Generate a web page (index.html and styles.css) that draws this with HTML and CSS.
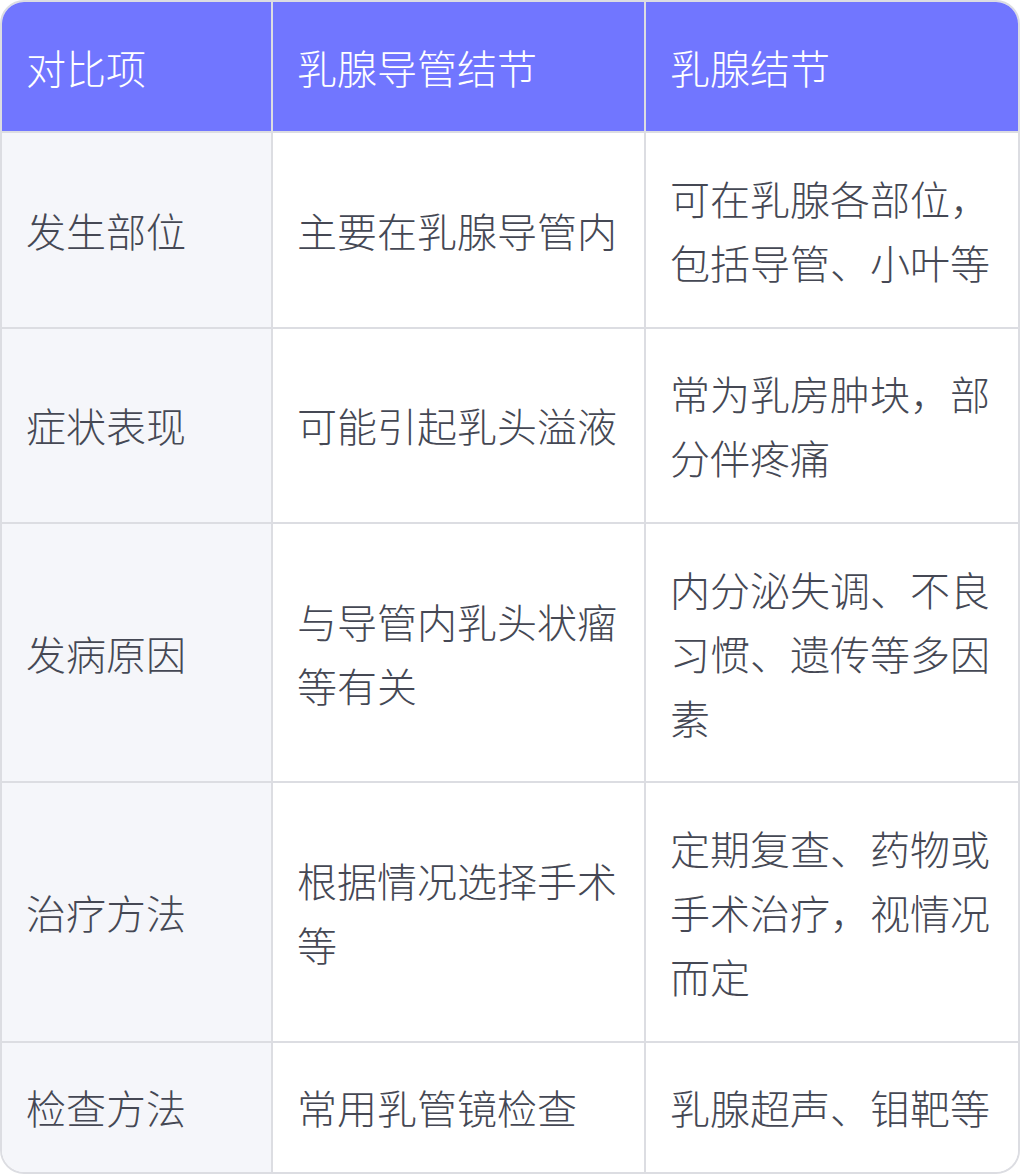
FILE: index.html
```html
<!DOCTYPE html>
<html lang="zh-CN">
<head>
<meta charset="utf-8">
<link rel="stylesheet" href="styles.css">
</head>
<body>
<table class="cmp">
  <colgroup>
    <col class="c1">
    <col class="c2">
    <col class="c3">
  </colgroup>
  <thead>
    <tr>
      <th>对比项</th>
      <th>乳腺导管结节</th>
      <th>乳腺结节</th>
    </tr>
  </thead>
  <tbody>
    <tr>
      <td class="label">发生部位</td>
      <td>主要在乳腺导管内</td>
      <td>可在乳腺各部位，包括导管、小叶等</td>
    </tr>
    <tr>
      <td class="label">症状表现</td>
      <td>可能引起乳头溢液</td>
      <td>常为乳房肿块，部分伴疼痛</td>
    </tr>
    <tr>
      <td class="label">发病原因</td>
      <td>与导管内乳头状瘤等有关</td>
      <td>内分泌失调、不良习惯、遗传等多因素</td>
    </tr>
    <tr>
      <td class="label">治疗方法</td>
      <td>根据情况选择手术等</td>
      <td>定期复查、药物或手术治疗，视情况而定</td>
    </tr>
    <tr>
      <td class="label">检查方法</td>
      <td>常用乳管镜检查</td>
      <td>乳腺超声、钼靶等</td>
    </tr>
  </tbody>
</table>
</body>
</html>
```
FILE: styles.css
```css
html, body {
  margin: 0;
  padding: 0;
  background: #ffffff;
}
.cmp {
  width: 1020px;
  table-layout: fixed;
  border-collapse: separate;
  border-spacing: 0;
  border: 2px solid #dcdde2;
  border-radius: 24px;
  overflow: hidden;
  font-family: "Noto Sans CJK SC", "Noto Sans", sans-serif;
  font-size: 40px;
  font-weight: 300;
  line-height: 64px;
  color: #454854;
}
.c1 { width: 269px; }
.c2 { width: 373px; }
.c3 { width: 374px; }
.cmp th, .cmp td {
  padding: 32.67px 20px 32.67px 24px;
  text-align: left;
  vertical-align: middle;
  font-weight: 300;
  word-break: break-all;
}
.cmp th {
  background: #7176ff;
  color: #ffffff;
  border-left: 2px solid #dcdde2;
}
.cmp th:first-child { border-left: 0; }
.cmp td {
  border-top: 2px solid #dcdde2;
  border-left: 2px solid #dcdde2;
  background: #ffffff;
}
.cmp td.label {
  border-left: 0;
  background: #f5f6fa;
}
```
